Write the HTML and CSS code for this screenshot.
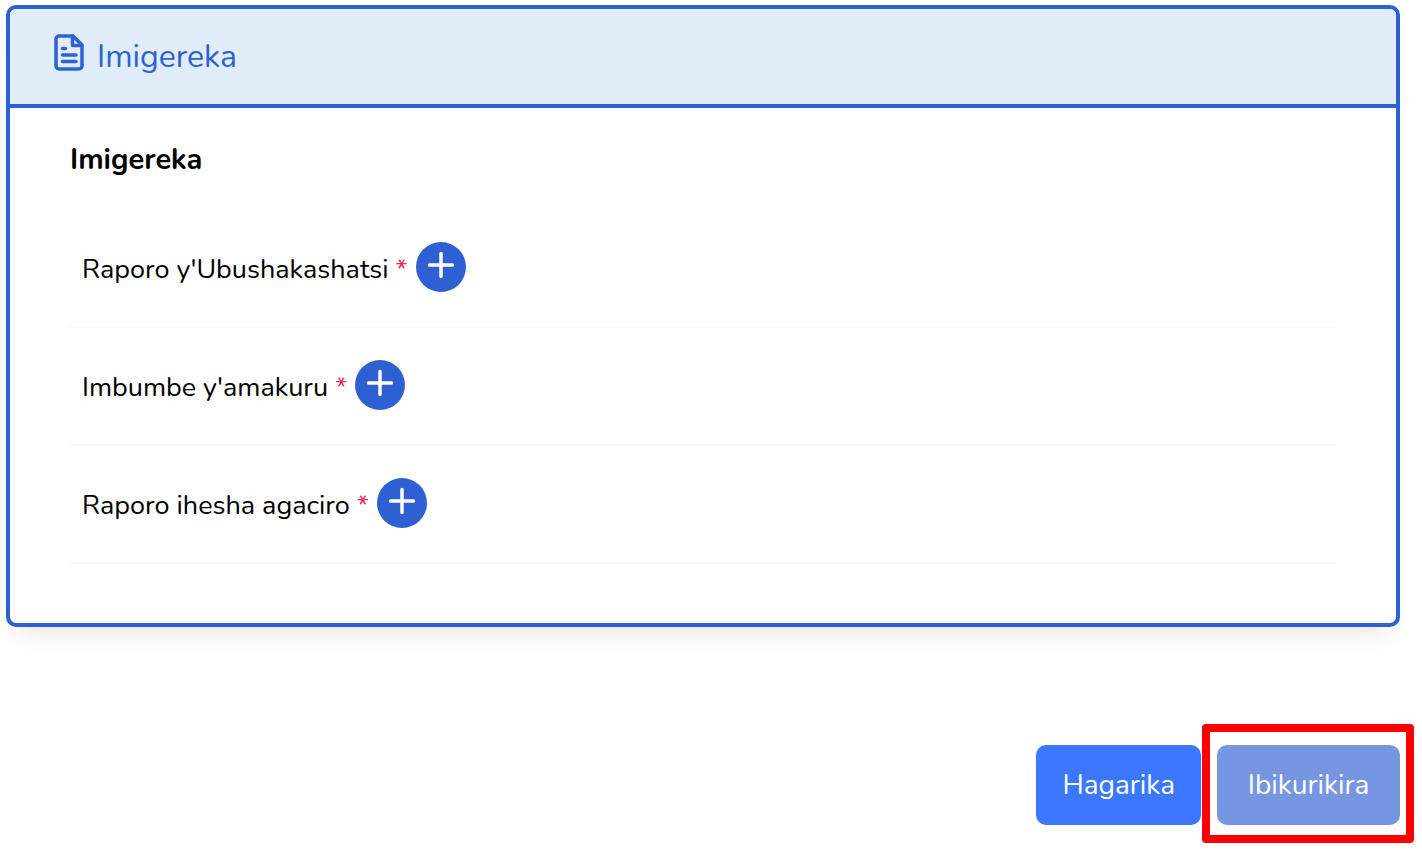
FILE: index.html
```html
<!DOCTYPE html>
<html lang="rw">

<head>
    <meta charset="UTF-8">
    <meta name="viewport" content="width=device-width, initial-scale=1.0">
    <title>Imigereka</title>
    <link rel="stylesheet" href="styles.css">
</head>

<body>
    <main class="page">
        <section class="card">
            <header class="card-header">
                <svg class="file-icon" viewBox="0 0 30 38" aria-hidden="true">
                    <path d="M5 2h14l9 9v21a3 3 0 0 1-3 3H5a3 3 0 0 1-3-3V5a3 3 0 0 1 3-3z" />
                    <path d="M18.5 2v9.500h9.500M8.500 14.500h3M8.500 21h13.500M8.500 27.500h13.500" />
                </svg>
                <h1 class="card-title">Imigereka</h1>
            </header>

            <div class="card-body">
                <h2 class="section-title">Imigereka</h2>
                <ul class="attachments">
                    <li class="attachment">
                        <label for="report">Raporo y'Ubushakashatsi <span class="required">*</span></label>
                        <button class="add-btn" id="report" type="button">
                            <svg class="plus" viewBox="0 0 28 28" aria-hidden="true"><path d="M14 2.500v23M2.500 14h23" /></svg>
                        </button>
                    </li>
                    <li class="attachment">
                        <label for="dataset">Imbumbe y'amakuru <span class="required">*</span></label>
                        <button class="add-btn" id="dataset" type="button">
                            <svg class="plus" viewBox="0 0 28 28" aria-hidden="true"><path d="M14 2.500v23M2.500 14h23" /></svg>
                        </button>
                    </li>
                    <li class="attachment">
                        <label for="valuation">Raporo ihesha agaciro <span class="required">*</span></label>
                        <button class="add-btn" id="valuation" type="button">
                            <svg class="plus" viewBox="0 0 28 28" aria-hidden="true"><path d="M14 2.500v23M2.500 14h23" /></svg>
                        </button>
                    </li>
                </ul>
            </div>
        </section>

        <div class="actions">
            <button class="btn" type="button">Hagarika</button>
            <div class="highlight">
                <button class="btn btn-next" type="button">Ibikurikira</button>
            </div>
        </div>
    </main>
</body>

</html>
```
FILE: styles.css
```css
* {
    box-sizing: border-box;
}

:root {
    --color-main: #2e60d3;
    --color-header: #e0ecf8;
    --color-cancel: #3c78ff;
    --color-next: #7796e1;
    --color-required: #f42a50;
}

body {
    margin: 0;
    background-color: #fefefe;
    color: #000;
    font-family: Nunito, Lato, "Open Sans", sans-serif;
    font-size: 28px;
    line-height: 40px;
}

.page {
    padding: 5px 22px 24px 6px;
}

.card {
    background-color: #fefefe;
    border: 4px solid var(--color-main);
    border-radius: 10px;
    box-shadow: 0 16px 24px -12px rgba(0, 0, 0, .1);
}

.card-header {
    display: flex;
    align-items: flex-start;
    gap: 13px;
    padding: 25px 44px 29px;
    background-color: var(--color-header);
    border-bottom: 4px solid var(--color-main);
    border-radius: 6px 6px 0 0;
    color: var(--color-main);
}

.file-icon {
    width: 30px;
    height: 38px;
    fill: none;
    stroke: currentColor;
    stroke-width: 3.5;
    stroke-linecap: round;
    stroke-linejoin: round;
}

.card-title {
    margin: 0;
    padding-top: 5px;
    font-size: 32px;
    font-weight: 400;
    line-height: 36px;
}

.card-body {
    padding: 32px 60px 59px;
}

.section-title {
    margin: 0 0 30px;
    font-size: 29px;
    font-weight: 700;
}

.attachments {
    margin: 0;
    padding: 0;
    list-style: none;
}

.attachment {
    display: flex;
    align-items: center;
    gap: 8px;
    height: 118px;
    padding: 0 12px 2px;
    border-bottom: 2px solid #f9f9f9;
}

.attachment label {
    padding-top: 6px;
    font-size: 27px;
}

.required {
    color: var(--color-required);
}

.add-btn {
    display: flex;
    justify-content: center;
    width: 50px;
    height: 50px;
    padding: 9px 0;
    border: 0;
    border-radius: 50%;
    background-color: var(--color-main);
    cursor: pointer;
}

.plus {
    width: 28px;
    height: 28px;
    stroke: #fff;
    stroke-width: 3.5;
    stroke-linecap: round;
}

.actions {
    display: flex;
    justify-content: flex-end;
    gap: 16px;
    margin-top: 118px;
}

.btn {
    min-width: 164px;
    height: 80px;
    padding: 0 26px;
    border: 0;
    border-radius: 10px;
    background-color: var(--color-cancel);
    color: #fff;
    font: inherit;
    cursor: pointer;
}

.btn-next {
    min-width: 183px;
    background-color: var(--color-next);
}

.highlight {
    position: relative;
}

/* red frame over the next step button */
.highlight::after {
    content: "";
    position: absolute;
    inset: -21px -14px -18px -15px;
    border: 8px solid #f00;
    border-radius: 4px;
    pointer-events: none;
}
```
